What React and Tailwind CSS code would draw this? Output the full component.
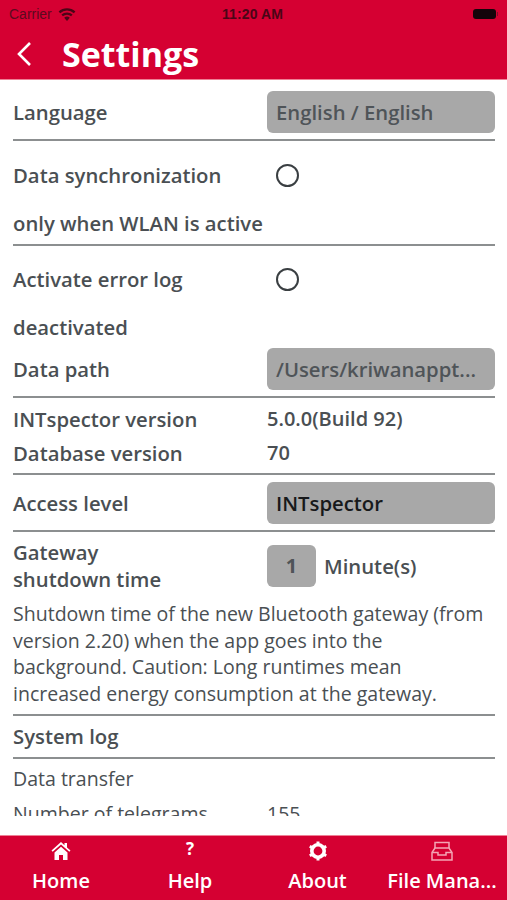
import React from 'react';

const font = { fontFamily: '"Open Sans", sans-serif' };

function Rule({ className = '' }) {
    return <div className={`h-[2px] bg-[#8c8f90] ${className}`} />;
}

function Label({ children }) {
    return <div className="w-[254px] shrink-0 text-[20.3px] font-semibold leading-[26px] text-[#4a4f53]">{children}</div>;
}

function Value({ children }) {
    return <div className="text-[20px] font-semibold leading-[26px] text-[#4a4f53]">{children}</div>;
}

function Pill({ children, dark }) {
    return (
        <div className={`flex h-[42px] w-[228px] items-center rounded-[6px] bg-[#a8a8a8] px-[9px] text-[20.3px] font-semibold ${dark ? 'text-[#17191b]' : 'text-[#4f5458]'}`}>
            {children}
        </div>
    );
}

function Radio() {
    return <div className="ml-[9px] h-[23px] w-[23px] rounded-full border-2 border-[#3a3f42]" />;
}

function Tab({ icon, label, className = '' }) {
    return (
        <div className={`flex flex-col items-center ${className}`}>
            <div className="flex h-[30px] items-center">{icon}</div>
            <div className="mt-[2px] text-[20px] font-semibold leading-[26px] text-white whitespace-nowrap">{label}</div>
        </div>
    );
}

export default function App() {
    return (
        <div style={font} className="flex h-[900px] w-[507px] flex-col overflow-hidden bg-white">
            {/* status bar + title */}
            <header className="h-[80px] shrink-0 border-b border-[#ee8095] bg-[#d50032]">
                <div className="relative flex h-[28px] items-center pl-[9px] pr-[9px] text-[14px] text-[#5c0a1e]">
                    <span style={{ fontFamily: '"Liberation Sans", sans-serif' }}>Carrier</span>
                    <svg className="ml-[6px]" width="18" height="14" viewBox="0 0 18 14" fill="#4a0516">
                        <path d="M9 14 6.2 10.8a4.2 4.2 0 0 1 5.6 0z" />
                        <path d="M4.9 9.3 3.4 7.6a8.4 8.4 0 0 1 11.2 0l-1.500 1.700a6.200 6.200 0 0 0-8.200 0z" />
                        <path d="M2.200 6.200.6 4.400a12.600 12.600 0 0 1 16.800 0l-1.600 1.800a10.200 10.200 0 0 0-13.600 0z" />
                    </svg>
                    <span style={{ fontFamily: '"Liberation Sans", sans-serif' }} className="absolute left-[222px] top-[6px] text-[14px] font-bold leading-[16px] tracking-[0.1px] text-[#4a0516]">11:20 AM</span>
                    <div className="ml-auto h-[10px] w-[23px] rounded-[3px] bg-[#14040a]" />
                    <div className="ml-[1px] h-[4px] w-[1px] bg-[#7a1228]" />
                </div>
                <div className="flex h-[51px] items-center pl-[16px]">
                    <svg width="16" height="26" viewBox="0 0 16 26" fill="none" stroke="white" strokeWidth="2.6">
                        <path d="M14 2 3 13l11 11" />
                    </svg>
                    <h1 className="ml-[30px] text-[34px] font-bold leading-none text-white">Settings</h1>
                </div>
            </header>

            {/* settings list */}
            <main className="h-[755px] shrink-0 overflow-hidden pl-[13px] pr-[12px]">
                <div className="mt-[11px] flex h-[42px] items-center"><Label>Language</Label><Pill>English / English</Pill></div>
                <Rule className="mt-[6px]" />
                <div className="mt-[21px] flex h-[26px] items-center"><Label>Data synchronization</Label><Radio /></div>
                <div className="mt-[22px]"><Label>only when WLAN is active</Label></div>
                <Rule className="mt-[8px]" />
                <div className="mt-[20px] flex h-[26px] items-center"><Label>Activate error log</Label><Radio /></div>
                <div className="mt-[22px]"><Label>deactivated</Label></div>
                <div className="mt-[8px] flex h-[42px] items-center"><Label>Data path</Label><Pill>/Users/kriwanappt...</Pill></div>
                <Rule className="mt-[6px]" />
                <div className="mt-[8px] flex"><Label>INTspector version</Label><Value>5.0.0(Build 92)</Value></div>
                <div className="mt-[8px] flex"><Label>Database version</Label><Value>70</Value></div>
                <Rule className="mt-[7px]" />
                <div className="mt-[7px] flex h-[42px] items-center"><Label>Access level</Label><Pill dark>INTspector</Pill></div>
                <Rule className="mt-[6px]" />
                <div className="mt-[10px] flex h-[48px] items-center">
                    <div className="w-[254px] shrink-0 text-[20.3px] font-semibold leading-[27px] text-[#4a4f53]">Gateway<br />shutdown time</div>
                    <div className="flex h-[42px] w-[49px] items-center justify-center rounded-[6px] bg-[#a8a8a8] text-[20px] font-bold text-[#4f5458]">1</div>
                    <div className="ml-[8px] text-[20.3px] font-semibold text-[#4a4f53]">Minute(s)</div>
                </div>
                <p className="mt-[11px] w-[476px] text-[19.55px] leading-[26.6px] text-[#4a4f53]">
                    Shutdown time of the new Bluetooth gateway (from version 2.20) when the app goes into the background. Caution: Long runtimes mean increased energy consumption at the gateway.
                </p>
                <Rule className="mt-[7px]" />
                <div className="mt-[7px]"><Label>System log</Label></div>
                <Rule className="mt-[8px]" />
                <div className="mt-[7px] text-[19.55px] leading-[26px] text-[#4a4f53]">Data transfer</div>
                <div className="h-[24px] overflow-hidden">
                    <div className="mt-[9px] flex text-[19.55px] leading-[26px] text-[#4a4f53]">
                        <div className="w-[254px] shrink-0">Number of telegrams</div>
                        <div>155</div>
                    </div>
                </div>
            </main>

            {/* tab bar */}
            <nav className="flex h-[65px] shrink-0 border-t border-[#ee8095] bg-[#d50032]">
                <Tab className="ml-[32px] w-[58px]" label="Home" icon={
                    <svg width="20" height="20" viewBox="0 0 20 20" fill="white">
                        <path d="M10 1 0.5 9.5l1.200 1.300L10 3.500l8.300 7.300 1.200-1.300L16 6.400V2h-2.500v2.200z" />
                        <path d="M3.500 11.500 10 5.700l6.500 5.800V19h-4.500v-5H8v5H3.500z" />
                    </svg>
                } />
                <Tab className="ml-[78px] w-[44px]" label="Help" icon={
                    <span className="mb-[6px] text-[17px] font-bold leading-none text-white">?</span>
                } />
                <Tab className="ml-[76px] w-[59px]" label="About" icon={
                    <svg width="20" height="20" viewBox="0 0 20 20" fill="none" stroke="white">
                        <circle cx="10" cy="10" r="6.200" strokeWidth="3.600" />
                        <g strokeWidth="3">
                            <path d="M10 .5v3M10 16.500v3M1.800 5.200l2.600 1.500M15.600 13.300l2.600 1.500M1.800 14.800l2.600-1.500M15.600 6.700l2.600-1.500" />
                        </g>
                    </svg>
                } />
                <Tab className="ml-[40px] w-[110px]" label="File Mana..." icon={
                    <svg width="22" height="20" viewBox="0 0 22 20" fill="none" stroke="#f4a5b5" strokeWidth="1.500">
                        <path d="M4 7V1.500h14V7" />
                        <path d="M1 11.500 4 7h14l3 4.500V19H1z" />
                        <path d="M1 11.500h6v2.500h8v-2.500h6" />
                    </svg>
                } />
            </nav>
        </div>
    );
}
